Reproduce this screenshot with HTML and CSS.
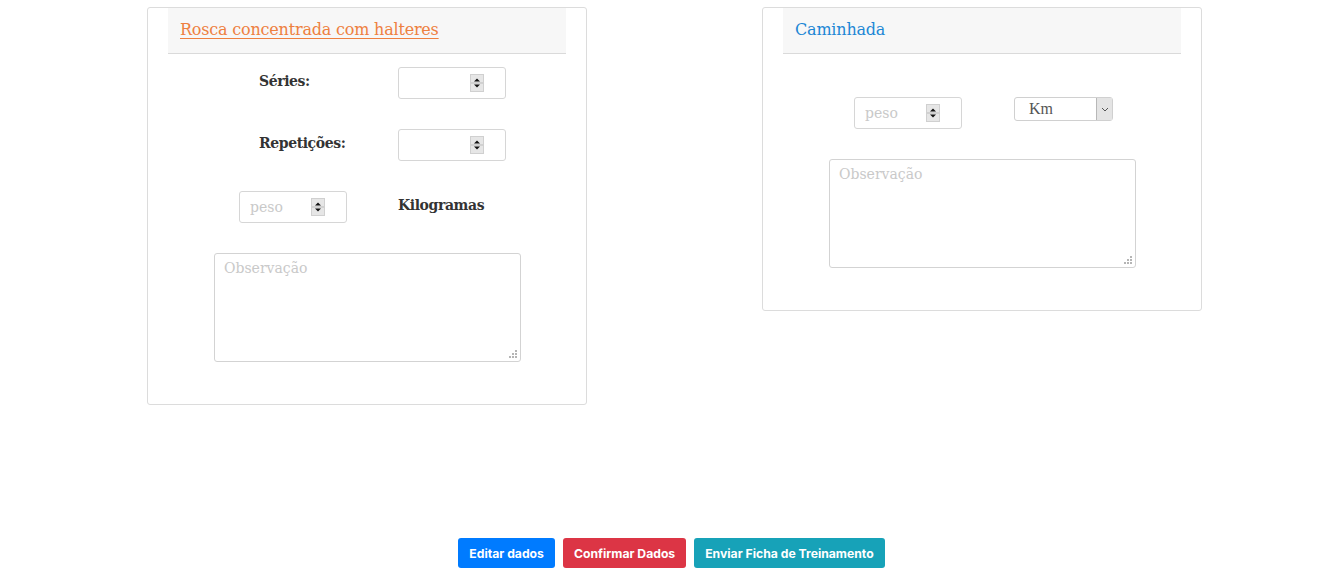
FILE: index.html
```html
<!DOCTYPE html>
<html lang="pt">
<head>
<meta charset="utf-8">
<title>Ficha de Treinamento</title>
<link rel="stylesheet" href="styles.css">
</head>
<body>
<div class="cards">
  <div class="card card-tall">
    <div class="card-head"><a class="title title-orange" href="#">Rosca concentrada com halteres</a></div>
    <div class="grid">
      <label class="lbl lbl-indent">Séries:</label>
      <div class="numbox"><input class="num" type="text"><span class="spin"><svg width="12" height="16" viewBox="0 0 12 16"><path d="M3 6.5h6L6 3.5z" fill="#111"/><path d="M3 9.5h6L6 12.5z" fill="#111"/><path d="M0 8h12" stroke="#bbb" stroke-width="1"/></svg></span></div>
      <label class="lbl lbl-indent">Repetições:</label>
      <div class="numbox"><input class="num" type="text"><span class="spin"><svg width="12" height="16" viewBox="0 0 12 16"><path d="M3 6.5h6L6 3.5z" fill="#111"/><path d="M3 9.5h6L6 12.5z" fill="#111"/><path d="M0 8h12" stroke="#bbb" stroke-width="1"/></svg></span></div>
      <div class="numbox"><input class="num" type="text" placeholder="peso"><span class="spin"><svg width="12" height="16" viewBox="0 0 12 16"><path d="M3 6.5h6L6 3.5z" fill="#111"/><path d="M3 9.5h6L6 12.5z" fill="#111"/><path d="M0 8h12" stroke="#bbb" stroke-width="1"/></svg></span></div>
      <label class="lbl">Kilogramas</label>
    </div>
    <textarea class="obs" placeholder="Observação"></textarea>
  </div>
  <div class="card card-short">
    <div class="card-head"><span class="title title-blue">Caminhada</span></div>
    <div class="grid grid-top">
      <div class="numbox"><input class="num" type="text" placeholder="peso"><span class="spin"><svg width="12" height="16" viewBox="0 0 12 16"><path d="M3 6.5h6L6 3.5z" fill="#111"/><path d="M3 9.5h6L6 12.5z" fill="#111"/><path d="M0 8h12" stroke="#bbb" stroke-width="1"/></svg></span></div>
      <div class="selectbox"><span class="sel-text">Km</span><span class="sel-btn"><svg width="10" height="8" viewBox="0 0 10 8"><path d="M2 3l3 3 3-3" fill="none" stroke="#555" stroke-width="1"/></svg></span></div>
    </div>
    <textarea class="obs" placeholder="Observação"></textarea>
  </div>
</div>
<div class="actions">
  <button class="btn btn-blue" type="button">Editar dados</button>
  <button class="btn btn-red" type="button">Confirmar Dados</button>
  <button class="btn btn-teal" type="button">Enviar Ficha de Treinamento</button>
</div>
</body>
</html>
```
FILE: styles.css
```css
html, body {
  margin: 0;
  padding: 0;
  background: #fff;
}
body {
  font-family: "DejaVu Serif", "Liberation Serif", serif;
  color: #333;
}
.cards {
  display: flex;
  align-items: flex-start;
  gap: 175px;
  padding: 7px 0 0 147px;
  height: 524px;
  box-sizing: border-box;
}
.card {
  width: 440px;
  box-sizing: border-box;
  border: 1px solid #dcdcdc;
  border-radius: 3px;
  display: flex;
  flex-direction: column;
}
.card-tall { height: 398px; }
.card-short { height: 304px; }
.card-head {
  margin: 0 20px;
  height: 46px;
  box-sizing: border-box;
  background: #f7f7f7;
  border-bottom: 1px solid #dadada;
  padding: 12px 0 0 12px;
}
.title {
  font-size: 16px;
  font-weight: 400;
  letter-spacing: -0.2px;
}
.title-orange {
  color: #ee8040;
  text-decoration: underline;
  text-underline-offset: 3px;
  text-decoration-thickness: 1px;
}
.title-blue { color: #1d87d5; }
.grid {
  display: grid;
  grid-template-columns: 159px 108px;
  row-gap: 30px;
  margin: 13px 0 0 91px;
  align-items: center;
}
.grid-top {
  margin-top: 43px;
  grid-template-columns: 160px 99px;
  align-items: start;
}
.lbl {
  font-weight: 700;
  font-size: 14px;
  letter-spacing: -0.4px;
  color: #333;
  margin-top: -4px;
}
.lbl-indent { padding-left: 20px; }
.numbox {
  width: 108px;
  height: 32px;
  box-sizing: border-box;
  border: 1px solid #d6d6d6;
  border-radius: 3px;
  display: flex;
  align-items: center;
  padding: 0 21px 0 10px;
}
.num {
  border: 0;
  outline: 0;
  width: 0;
  flex: 1;
  padding: 0;
  font-family: "DejaVu Serif", serif;
  font-size: 14px;
  color: #333;
  background: transparent;
}
.num::placeholder { color: #c9c9c9; }
.spin {
  width: 14px;
  height: 18px;
  box-sizing: border-box;
  background: #e6e6e6;
  border: 1px solid #d0d0d0;
  display: flex;
  align-items: center;
  justify-content: center;
}
.spin svg { display: block; }
.selectbox {
  width: 99px;
  height: 24px;
  box-sizing: border-box;
  border: 1px solid #d0d0d0;
  border-radius: 3px;
  display: flex;
  align-items: center;
  background: #fff;
}
.sel-text {
  flex: 1;
  padding-left: 14px;
  font-family: "Liberation Serif", serif;
  font-size: 16px;
  color: #555;
}
.sel-btn {
  width: 16px;
  height: 22px;
  box-sizing: border-box;
  background: #e4e4e4;
  border-left: 1px solid #b8b8b8;
  display: flex;
  align-items: center;
  justify-content: center;
}
.obs {
  display: block;
  width: 307px;
  height: 109px;
  box-sizing: border-box;
  margin: 30px 0 0 66px;
  border: 1px solid #d3d3d3;
  border-radius: 3px;
  padding: 6px 9px;
  font-family: "DejaVu Serif", serif;
  font-size: 14px;
  color: #333;
  outline: 0;
  resize: none;
  background-color: #fff;
  background-image:
    linear-gradient(#b5b5b5, #b5b5b5),
    linear-gradient(#b5b5b5, #b5b5b5),
    linear-gradient(#b5b5b5, #b5b5b5),
    linear-gradient(#b5b5b5, #b5b5b5),
    linear-gradient(#b5b5b5, #b5b5b5),
    linear-gradient(#b5b5b5, #b5b5b5);
  background-size: 2px 2px;
  background-repeat: no-repeat;
  background-position:
    right 3px bottom 3px,
    right 6px bottom 3px,
    right 9px bottom 3px,
    right 3px bottom 6px,
    right 6px bottom 6px,
    right 3px bottom 9px;
}
.obs::placeholder { color: #c9c9c9; }
.actions {
  display: flex;
  justify-content: center;
  gap: 8px;
  padding-top: 14px;
}
.btn {
  height: 30px;
  border: 0;
  border-radius: 3px;
  color: #fff;
  font-family: "Inter", "DejaVu Sans", sans-serif;
  font-weight: 700;
  font-size: 12.2px;
  letter-spacing: 0;
  padding: 0 11px;
  cursor: pointer;
}
.btn-blue { background: #007bff; }
.btn-red { background: #dc3545; }
.btn-teal { background: #17a2b8; }
```
